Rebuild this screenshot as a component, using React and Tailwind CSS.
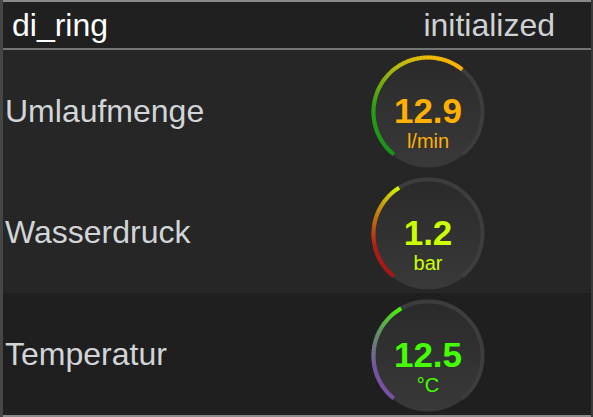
import React from "react";

const START = -141;
const END = 141;

function pt(cx, cy, r, deg) {
  const a = (deg * Math.PI) / 180;
  return [cx + r * Math.sin(a), cy - r * Math.cos(a)];
}

function arcPath(cx, cy, r, a, b) {
  const [x1, y1] = pt(cx, cy, r, a);
  const [x2, y2] = pt(cx, cy, r, b);
  const large = b - a > 180 ? 1 : 0;
  return `M ${x1.toFixed(2)} ${y1.toFixed(2)} A ${r} ${r} 0 ${large} 1 ${x2.toFixed(2)} ${y2.toFixed(2)}`;
}

function colorAt(stops, t) {
  for (let i = 0; i < stops.length - 1; i++) {
    const [t0, c0] = stops[i];
    const [t1, c1] = stops[i + 1];
    if (t >= t0 && t <= t1) {
      const u = (t - t0) / (t1 - t0 || 1);
      const r = Math.round(c0[0] + (c1[0] - c0[0]) * u);
      const g = Math.round(c0[1] + (c1[1] - c0[1]) * u);
      const b = Math.round(c0[2] + (c1[2] - c0[2]) * u);
      return `rgb(${r},${g},${b})`;
    }
  }
  const c = stops[stops.length - 1][1];
  return `rgb(${c[0]},${c[1]},${c[2]})`;
}

function Gauge({ value, unit, endAngle, stops, color }) {
  const cx = 58;
  const cy = 58;
  const r = 54.5;
  const segs = [];
  const step = 1.5;
  const total = endAngle - START;
  for (let a = START; a < endAngle; a += step) {
    const b = Math.min(a + step + 0.4, endAngle);
    const t = (a - START) / total;
    segs.push(
      <path
        key={a}
        d={arcPath(cx, cy, r, a, b)}
        stroke={colorAt(stops, t)}
        strokeWidth="4"
        fill="none"
      />
    );
  }
  const gid = `disc-${value}`;
  return (
    <div className="relative w-[116px] h-[116px] shrink-0 mt-[3px]">
      <svg width="116" height="116" viewBox="0 0 116 116">
        <defs>
          <linearGradient id={gid} x1="0" y1="0" x2="0" y2="1">
            <stop offset="0" stopColor="#2a2a2a" />
            <stop offset="1" stopColor="#393939" />
          </linearGradient>
        </defs>
        <circle cx={cx} cy={cy} r={55.5} fill={`url(#${gid})`} />
        <path
          d={arcPath(cx, cy, r, START, END)}
          stroke="#3d3d3d"
          strokeWidth="4"
          fill="none"
        />
        {segs}
        <text
          x={cx}
          y={cy + 10.5}
          textAnchor="middle"
          fill={color}
          className="font-bold text-[35px] [font-family:'Liberation_Sans',Arial,sans-serif]"
        >
          {value}
        </text>
        <text
          x={cx}
          y={cy + 36}
          textAnchor="middle"
          fill={color}
          className="text-[20px] [font-family:'Liberation_Sans',Arial,sans-serif]"
        >
          {unit}
        </text>
      </svg>
    </div>
  );
}

function Row({ label, bg, h, children }) {
  return (
    <div className={`flex items-center ${bg} ${h}`}>
      <div className="w-[367px] shrink-0 pl-[2px] text-[32px] text-[#d2d5d8] leading-none">
        {label}
      </div>
      {children}
    </div>
  );
}

export default function App() {
  return (
    <div className="w-[593px] h-[417px] flex bg-[#262626] [font-family:'Liberation_Sans',Arial,sans-serif] overflow-hidden">
      <div className="w-[3px] bg-[#464646] shrink-0" />
      <div className="flex flex-col w-[588px] shrink-0">
        <div className="h-[2px] bg-[#8a8a8a]" />
        <div className="h-[46px] bg-[#202020] flex items-center justify-between pl-[9px] pr-[36px]">
          <span className="text-[32px] text-white leading-none">di_ring</span>
          <span className="text-[32px] text-[#cfd2d5] leading-none">initialized</span>
        </div>
        <div className="h-[2px] bg-[#747474]" />
        <Row label="Umlaufmenge" bg="bg-[#262626]" h="h-[121px]">
          <Gauge
            value="12.9"
            unit="l/min"
            endAngle={39}
            stops={[
              [0, [24, 150, 24]],
              [0.3, [40, 160, 20]],
              [0.6, [190, 190, 10]],
              [0.8, [245, 190, 0]],
              [1, [255, 176, 0]],
            ]}
            color="#ffb000"
          />
        </Row>
        <Row label="Wasserdruck" bg="bg-[#262626]" h="h-[122px]">
          <Gauge
            value="1.2"
            unit="bar"
            endAngle={-32}
            stops={[
              [0, [170, 20, 20]],
              [0.35, [180, 30, 20]],
              [0.7, [200, 140, 10]],
              [1, [215, 255, 0]],
            ]}
            color="#ccff00"
          />
        </Row>
        <Row label="Temperatur" bg="bg-[#1f1f1f]" h="h-[122px]">
          <Gauge
            value="12.5"
            unit="°C"
            endAngle={-29.5}
            stops={[
              [0, [125, 80, 170]],
              [0.35, [120, 85, 165]],
              [0.7, [100, 150, 100]],
              [1, [70, 255, 0]],
            ]}
            color="#44ff00"
          />
        </Row>
        <div className="h-[2px] bg-[#8a8a8a]" />
      </div>
      <div className="w-[2px] bg-[#3a3a3a] shrink-0" />
    </div>
  );
}
